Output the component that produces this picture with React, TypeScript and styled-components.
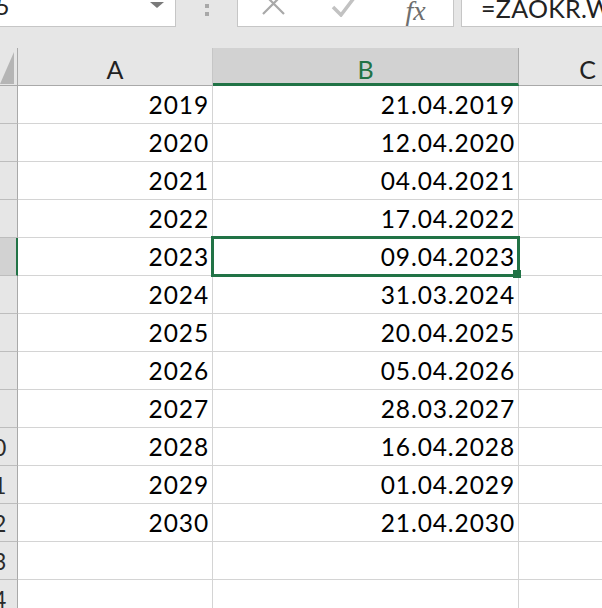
import React from "react";
import styled, { createGlobalStyle } from "styled-components";

const GlobalStyle = createGlobalStyle`
  html, body { margin: 0; padding: 0; background: #ffffff; overflow: hidden; }
  * { box-sizing: border-box; }
`;

const GREEN = "#217346";
const FONT = `"Lato", "Liberation Sans", sans-serif`;

const Window = styled.div`
  width: 602px;
  height: 608px;
  overflow: hidden;
  background: #e6e6e6;
  display: flex;
  flex-direction: column;
  font-family: ${FONT};
`;

const FormulaBar = styled.div`
  display: flex;
  height: 27px;
  flex-shrink: 0;
`;

const NameBox = styled.div`
  width: 176px;
  background: #ffffff;
  border-right: 1px solid #c6c6c6;
  border-bottom: 1px solid #c6c6c6;
  display: flex;
  justify-content: space-between;
  align-items: flex-start;
  overflow: hidden;
`;

const NameText = styled.span`
  font-size: 24px;
  line-height: 24px;
  margin-top: -6px;
  margin-left: -20px;
  color: #222;
  white-space: nowrap;
`;

const DropArrow = styled.span`
  width: 0;
  height: 0;
  border-left: 7px solid transparent;
  border-right: 7px solid transparent;
  border-top: 6px solid #7a7a7a;
  margin: 2px 11px 0 0;
`;

const Grip = styled.div`
  width: 61px;
  display: flex;
  flex-direction: column;
  align-items: center;
  gap: 4px;
  padding-top: 4px;
`;

const GripDot = styled.span`
  width: 4px;
  height: 4px;
  background: #a8a8a8;
`;

const ActionBox = styled.div`
  width: 217px;
  background: #ffffff;
  border: 1px solid #c6c6c6;
  border-top: none;
  display: grid;
  grid-template-columns: repeat(3, 71px);
  justify-items: center;
  align-items: start;
  overflow: hidden;
`;

const IconSvg = styled.svg<{ $top: number }>`
  margin-top: ${(p) => p.$top}px;
  display: block;
`;

const Fx = styled.span`
  font-family: "Liberation Serif", "DejaVu Serif", serif;
  font-style: italic;
  font-size: 28px;
  line-height: 28px;
  margin-top: -3px;
  color: #6e6e6e;
`;

const FormulaBox = styled.div`
  flex: 1;
  margin-left: 7px;
  background: #ffffff;
  border-left: 1px solid #c6c6c6;
  border-bottom: 1px solid #c6c6c6;
  overflow: hidden;
  white-space: nowrap;
  padding-left: 19px;
`;

const FormulaText = styled.div`
  font-size: 25px;
  line-height: 25px;
  margin-top: -4px;
  letter-spacing: 0.3px;
  color: #222;
`;

const Gap = styled.div`
  height: 21px;
  flex-shrink: 0;
`;

const Sheet = styled.div`
  display: grid;
  grid-template-columns: 18px 195px 306px 138px;
  grid-auto-rows: 38px;
  background: #ffffff;
`;

const Corner = styled.div`
  background: #e6e6e6;
  border-right: 1px solid #a9a9a9;
  border-bottom: 1px solid #a9a9a9;
  display: flex;
  align-items: flex-end;
  padding-bottom: 1px;
`;

const ColHeader = styled.div<{ $active?: boolean }>`
  background: ${(p) => (p.$active ? "#d2d2d2" : "#e6e6e6")};
  border-right: 1px solid ${(p) => (p.$active ? "#ababab" : "#c6c6c6")};
  border-bottom: ${(p) => (p.$active ? `3px solid ${GREEN}` : "1px solid #a9a9a9")};
  color: ${(p) => (p.$active ? GREEN : "#222")};
  font-size: 25px;
  display: flex;
  align-items: center;
  justify-content: center;
  padding-top: ${(p) => (p.$active ? "6px" : "4px")};
`;

const RowHeader = styled.div<{ $active?: boolean }>`
  background: ${(p) => (p.$active ? "#d2d2d2" : "#e6e6e6")};
  border-right: ${(p) => (p.$active ? `2px solid ${GREEN}` : "1px solid #a9a9a9")};
  border-bottom: 1px solid #bdbdbd;
  display: flex;
  justify-content: flex-end;
  align-items: center;
  overflow: hidden;
`;

const RowLabel = styled.span<{ $active?: boolean }>`
  flex-shrink: 0;
  width: 48px;
  text-align: center;
  font-size: 23px;
  color: ${(p) => (p.$active ? GREEN : "#2b2b2b")};
`;

const Cell = styled.div<{ $selected?: boolean }>`
  position: relative;
  border-right: 1px solid #d4d4d4;
  border-bottom: 1px solid #d4d4d4;
  display: flex;
  align-items: center;
  justify-content: flex-end;
  padding-right: 3px;
  font-size: 24.5px;
  letter-spacing: 0.9px;
  color: #000;
  white-space: nowrap;

  ${(p) =>
    p.$selected &&
    `
    &::before {
      content: "";
      position: absolute;
      left: -2px;
      top: -2px;
      right: -2px;
      bottom: -2px;
      border: 3px solid ${GREEN};
      z-index: 1;
    }
    &::after {
      content: "";
      position: absolute;
      right: -3px;
      bottom: -3px;
      width: 8px;
      height: 8px;
      background: ${GREEN};
      z-index: 2;
    }
  `}
`;

const rows: [string, string][] = [
  ["2019", "21.04.2019"],
  ["2020", "12.04.2020"],
  ["2021", "04.04.2021"],
  ["2022", "17.04.2022"],
  ["2023", "09.04.2023"],
  ["2024", "31.03.2024"],
  ["2025", "20.04.2025"],
  ["2026", "05.04.2026"],
  ["2027", "28.03.2027"],
  ["2028", "16.04.2028"],
  ["2029", "01.04.2029"],
  ["2030", "21.04.2030"],
  ["", ""],
  ["", ""],
];

export default function App() {
  return (
    <>
      <GlobalStyle />
      <Window>
        <FormulaBar>
          <NameBox>
            <NameText>B5</NameText>
            <DropArrow />
          </NameBox>
          <Grip>
            <GripDot />
            <GripDot />
          </Grip>
          <ActionBox>
            <IconSvg $top={-7} width="23" height="22" viewBox="0 0 23 22">
              <path d="M1 0 L22 21 M22 0 L1 21" stroke="#a9a9a9" strokeWidth="2.2" fill="none" />
            </IconSvg>
            <IconSvg $top={-8} width="27" height="25" viewBox="0 0 27 25">
              <path d="M2 15 L10 23 L26 2" stroke="#c2c2c2" strokeWidth="3.5" fill="none" strokeLinejoin="miter" />
            </IconSvg>
            <Fx>fx</Fx>
          </ActionBox>
          <FormulaBox>
            <FormulaText>=ZAOKR.W.GÓRĘ(DATA(A5;3;14)/7;1)*7-6</FormulaText>
          </FormulaBox>
        </FormulaBar>
        <Gap />
        <Sheet>
          <Corner>
            <svg width="14" height="32" viewBox="0 0 14 32">
              <polygon points="0,32 14,32 14,0" fill="#b5b5b5" />
            </svg>
          </Corner>
          <ColHeader>A</ColHeader>
          <ColHeader $active>B</ColHeader>
          <ColHeader>C</ColHeader>
          {rows.map(([year, date], i) => {
            const active = i === 4;
            return (
              <React.Fragment key={i}>
                <RowHeader $active={active}>
                  <RowLabel $active={active}>{i + 1}</RowLabel>
                </RowHeader>
                <Cell>{year}</Cell>
                <Cell $selected={active}>{date}</Cell>
                <Cell />
              </React.Fragment>
            );
          })}
        </Sheet>
      </Window>
    </>
  );
}
